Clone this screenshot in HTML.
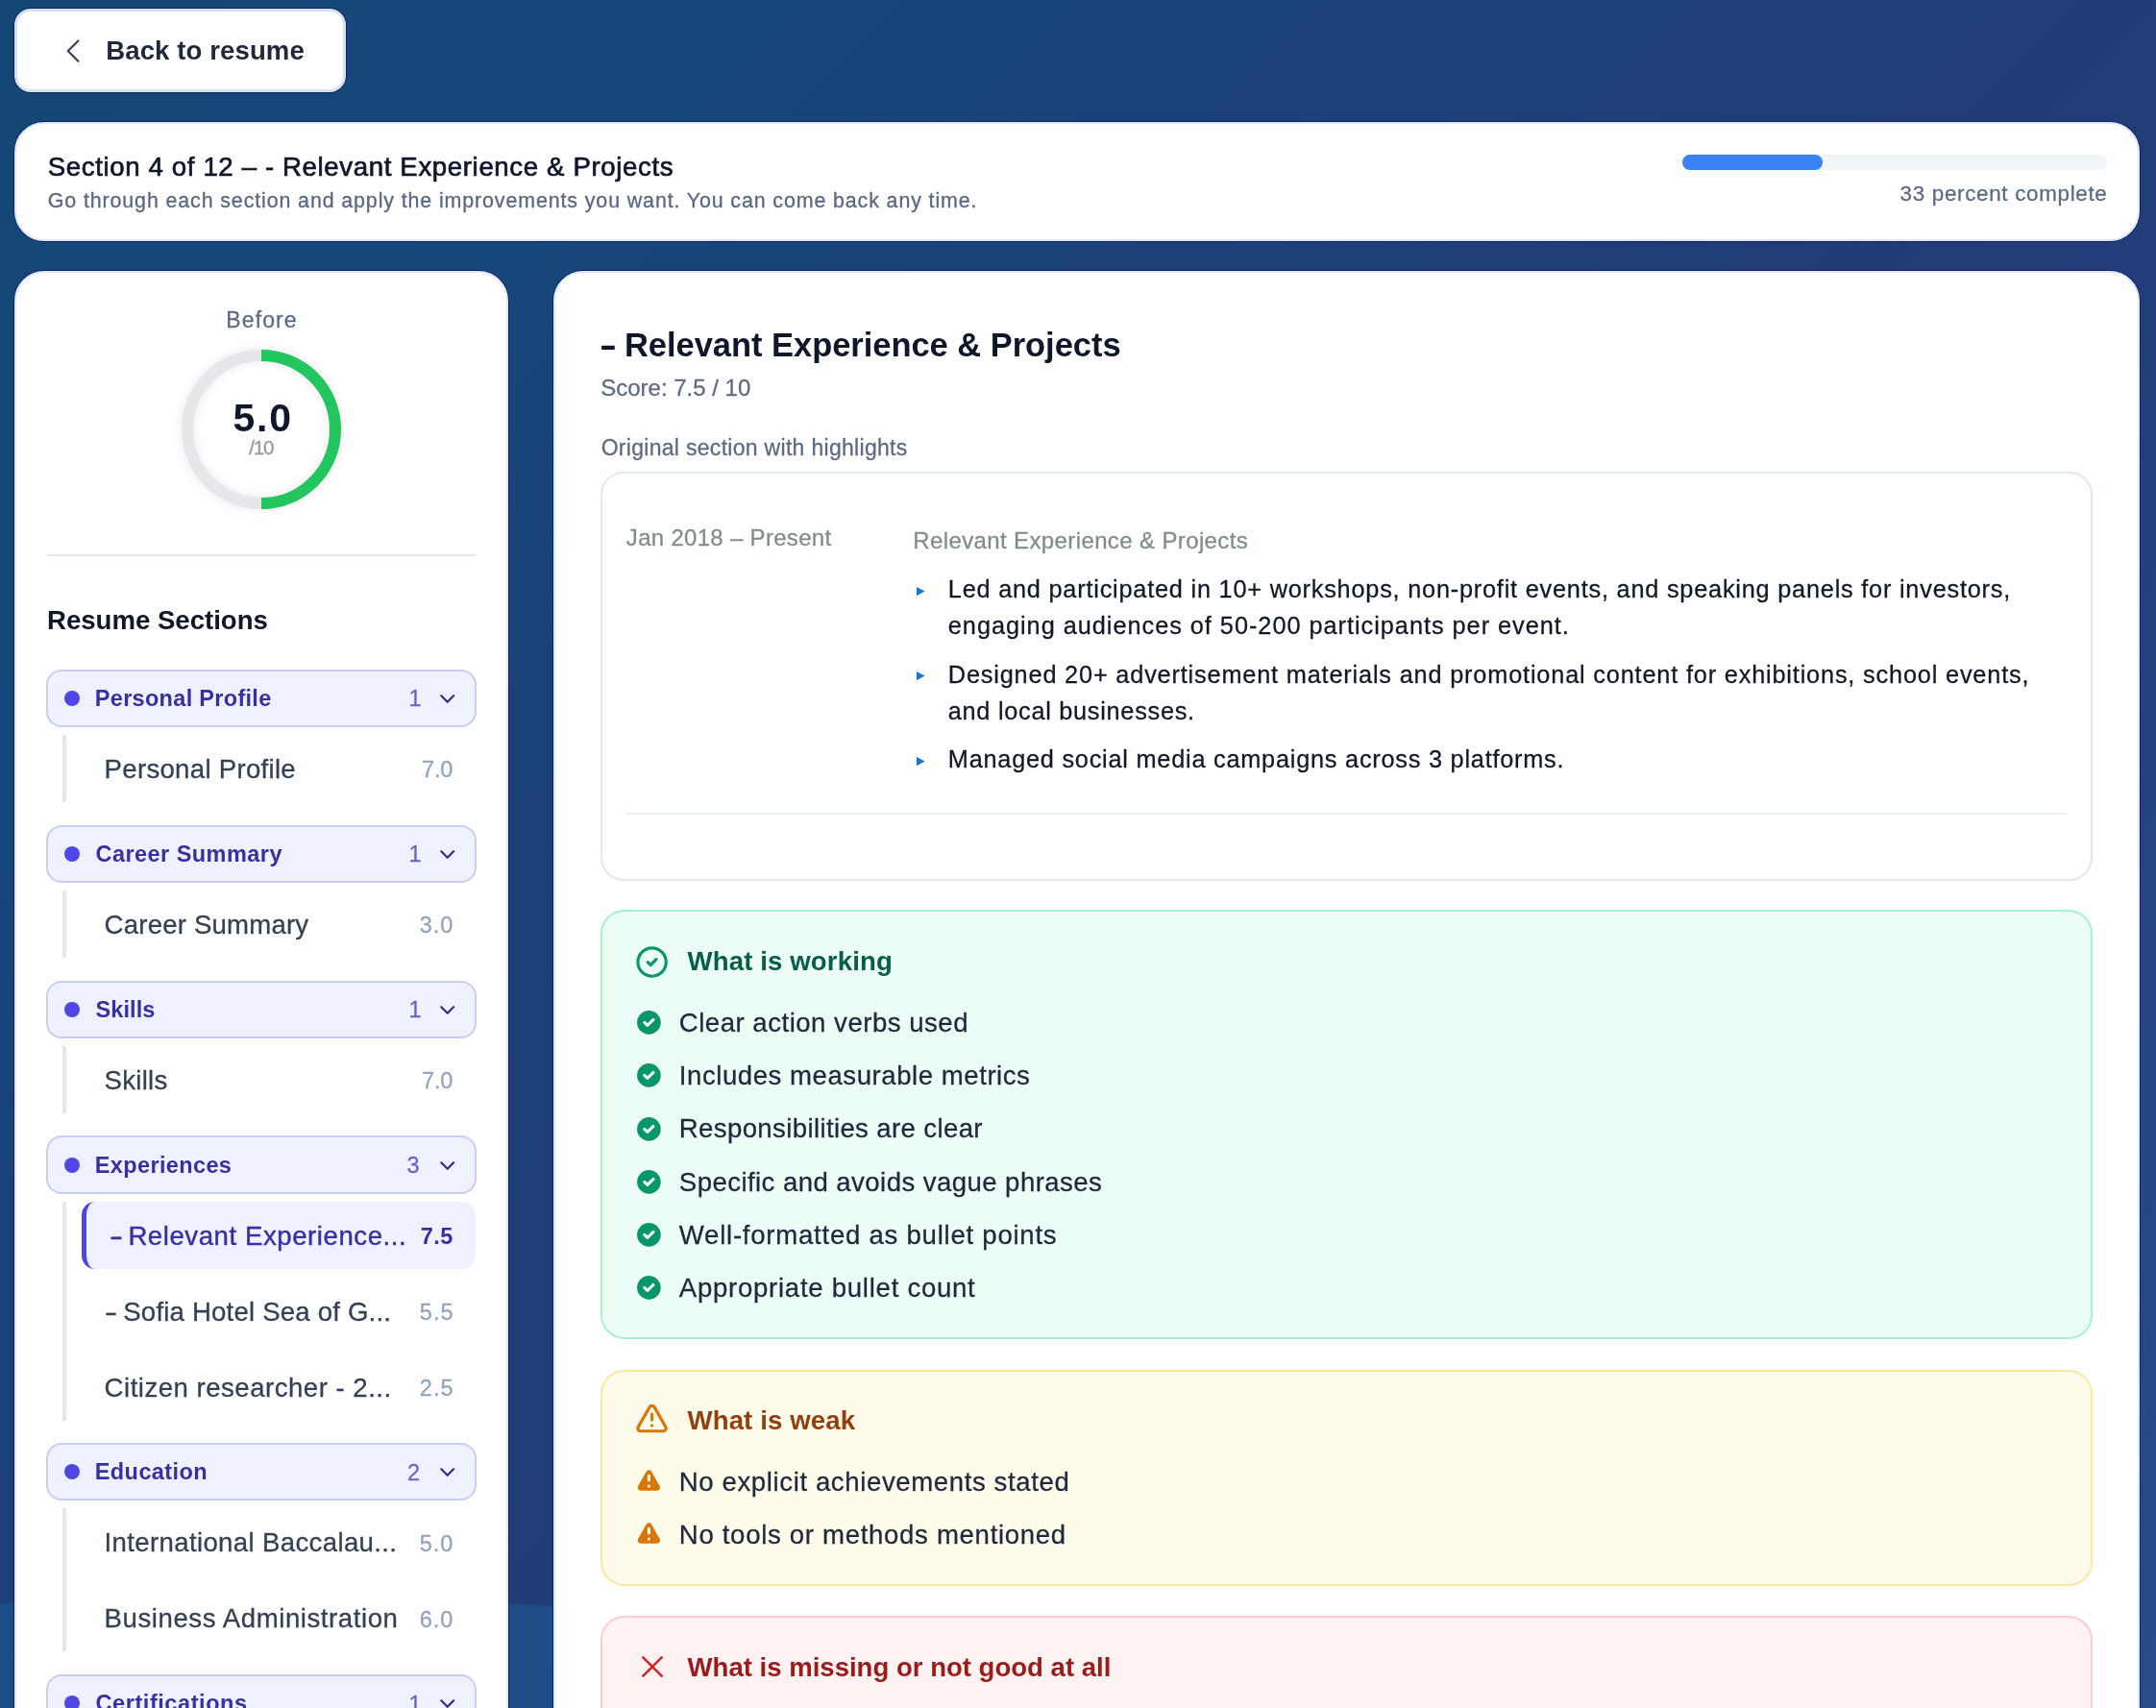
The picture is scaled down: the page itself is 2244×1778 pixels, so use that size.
<!DOCTYPE html>
<html lang="en"><head><meta charset="utf-8"><title>Resume review</title><style>
*{margin:0;padding:0;box-sizing:border-box;}
html,body{width:2244px;height:1778px;overflow:hidden;}
body{position:relative;font-family:"Liberation Sans", sans-serif;background:linear-gradient(135deg,#144775 0%,#16477a 20%,#1a4278 31%,#203c77 55%,#254685 85%,#294b8a 100%);}
#app{position:absolute;left:0;top:0;width:2244px;height:1778px;overflow:hidden;will-change:transform;}
.abs{position:absolute;display:block;}
.t{position:absolute;white-space:nowrap;line-height:1;font-family:"Liberation Sans", sans-serif;}
.card{background:#fff;border:2.6px solid #dfe6f5;box-shadow:0 0 0 1px rgba(8,10,90,.55);box-sizing:border-box;}
</style></head>
<body>
<div id="app">
<svg class="abs" style="left:0;top:1600px" width="2244" height="178" viewBox="0 0 2244 178"><path d="M0 69 C 200 60, 400 62, 576 72 C 900 92, 1300 140, 2244 178 L2244 178 L0 178 Z" fill="#1e5a94" fill-opacity="0.55"/></svg>
<div class="card" style="position:absolute;left:15px;top:9px;width:345px;height:87px;border-radius:17px;border:3px solid #d8e0ef;"></div>
<svg class="abs" style="left:58.9px;top:35.55px" width="34.2" height="34.2" viewBox="0 0 24 24" fill="none" stroke="#334155" stroke-width="1.5" stroke-linecap="round" stroke-linejoin="round"><path d="M15.75 19.5 8.25 12l7.5-7.5"/></svg>
<div class="t" id="back" style="left:110.20px;top:39.00px;font-size:27.6px;color:#1e293b;font-weight:700;letter-spacing:0.085px;">Back to resume</div>
<div class="card" style="position:absolute;left:15px;top:127px;width:2212px;height:124px;border-radius:31px;"></div>
<div class="t" id="hd1" style="left:49.73px;top:160.00px;font-size:27.6px;color:#0f172a;letter-spacing:0.636px;-webkit-text-stroke:0.7px #0f172a;">Section 4 of 12 – - Relevant Experience &amp; Projects</div>
<div class="t" id="hd2" style="left:49.75px;top:199.00px;font-size:21.4px;color:#5a6880;letter-spacing:0.889px;-webkit-text-stroke:0.3px #5a6880;">Go through each section and apply the improvements you want. You can come back any time.</div>
<div style="position:absolute;left:1751px;top:161px;width:442px;height:16px;background:#f1f5f9;border-radius:8px;"></div>
<div style="position:absolute;left:1751px;top:161px;width:146px;height:16px;background:#3b82f6;border-radius:8px;"></div>
<div class="t" id="pct" style="left:1977.59px;top:191.00px;font-size:22.4px;color:#5c6a82;letter-spacing:0.687px;-webkit-text-stroke:0.28px #5c6a82;">33 percent complete</div>
<div class="card" style="position:absolute;left:15px;top:282px;width:514px;height:1618px;border-radius:31px;"></div>
<div class="t" id="before" style="left:235.30px;top:322.00px;font-size:23px;color:#5c6a82;letter-spacing:1.110px;-webkit-text-stroke:0.28px #5c6a82;">Before</div>
<svg class="abs" style="left:182px;top:357px;filter:drop-shadow(0 0 5px rgba(15,23,42,.10));overflow:visible" width="180" height="180" viewBox="0 0 180 180"><circle cx="90" cy="90" r="77" fill="none" stroke="#e5e7eb" stroke-width="12"/><path d="M90 13 A77 77 0 0 1 90 167" fill="none" stroke="#22c55e" stroke-width="12"/></svg>
<div class="t" id="score" style="left:242.47px;top:415.00px;font-size:41px;color:#0f172a;font-weight:700;letter-spacing:1.793px;">5.0</div>
<div class="t" id="of10" style="left:259.14px;top:456.00px;font-size:20.7px;color:#9298a6;letter-spacing:-1.192px;-webkit-text-stroke:0.28px #9298a6;">/10</div>
<div style="position:absolute;left:49px;top:577px;width:446px;height:2px;background:#e2e8f0;"></div>
<div class="t" id="rs" style="left:49.00px;top:632.00px;font-size:27.6px;color:#0f172a;font-weight:700;letter-spacing:-0.010px;">Resume Sections</div>
<div style="position:absolute;left:48.4px;top:696.5px;width:447.8px;height:60.5px;background:#eef2ff;border:2px solid #c8cdf2;border-radius:16px;box-sizing:border-box;"></div>
<div style="position:absolute;left:67px;top:719.0px;width:16px;height:16.0px;background:#4f46e5;border-radius:50%;"></div>
<div class="t" id="g1h" style="left:98.79px;top:716.00px;font-size:23.5px;color:#3730a3;font-weight:700;letter-spacing:0.303px;">Personal Profile</div>
<div class="t" id="g1c" style="left:425.58px;top:716.00px;font-size:23.5px;color:#6366c8;-webkit-text-stroke:0.28px #6366c8;">1</div>
<svg class="abs" style="left:455px;top:717.0px" width="22" height="20" viewBox="0 0 22 20" fill="none" stroke="#312e81" stroke-width="2.2" stroke-linecap="round" stroke-linejoin="round"><path d="M4.3 7.2 L10.7 13.8 L17.1 7.2"/></svg>
<div style="position:absolute;left:65px;top:765.0px;width:4px;height:70.0px;background:#e5e7eb;"></div>
<div class="t" id="g1i0" style="left:108.60px;top:787.00px;font-size:27.6px;color:#334155;letter-spacing:0.288px;-webkit-text-stroke:0.28px #334155;">Personal Profile</div>
<div class="t" id="g1s0" style="left:439.10px;top:790.00px;font-size:23.5px;color:#94a3b8;letter-spacing:-0.240px;-webkit-text-stroke:0.28px #94a3b8;">7.0</div>
<div style="position:absolute;left:48.4px;top:858.5px;width:447.8px;height:60.5px;background:#eef2ff;border:2px solid #c8cdf2;border-radius:16px;box-sizing:border-box;"></div>
<div style="position:absolute;left:67px;top:881.0px;width:16px;height:16.0px;background:#4f46e5;border-radius:50%;"></div>
<div class="t" id="g2h" style="left:99.51px;top:878.00px;font-size:23.5px;color:#3730a3;font-weight:700;letter-spacing:0.454px;">Career Summary</div>
<div class="t" id="g2c" style="left:425.58px;top:878.00px;font-size:23.5px;color:#6366c8;-webkit-text-stroke:0.28px #6366c8;">1</div>
<svg class="abs" style="left:455px;top:879.0px" width="22" height="20" viewBox="0 0 22 20" fill="none" stroke="#312e81" stroke-width="2.2" stroke-linecap="round" stroke-linejoin="round"><path d="M4.3 7.2 L10.7 13.8 L17.1 7.2"/></svg>
<div style="position:absolute;left:65px;top:927.0px;width:4px;height:70.0px;background:#e5e7eb;"></div>
<div class="t" id="g2i0" style="left:108.60px;top:949.00px;font-size:27.6px;color:#334155;letter-spacing:0.193px;-webkit-text-stroke:0.28px #334155;">Career Summary</div>
<div class="t" id="g2s0" style="left:436.79px;top:952.00px;font-size:23.5px;color:#94a3b8;letter-spacing:0.915px;-webkit-text-stroke:0.28px #94a3b8;">3.0</div>
<div style="position:absolute;left:48.4px;top:1020.5px;width:447.8px;height:60.5px;background:#eef2ff;border:2px solid #c8cdf2;border-radius:16px;box-sizing:border-box;"></div>
<div style="position:absolute;left:67px;top:1043.0px;width:16px;height:16.0px;background:#4f46e5;border-radius:50%;"></div>
<div class="t" id="g3h" style="left:99.54px;top:1040.00px;font-size:23.5px;color:#3730a3;font-weight:700;letter-spacing:0.089px;">Skills</div>
<div class="t" id="g3c" style="left:425.58px;top:1040.00px;font-size:23.5px;color:#6366c8;-webkit-text-stroke:0.28px #6366c8;">1</div>
<svg class="abs" style="left:455px;top:1041.0px" width="22" height="20" viewBox="0 0 22 20" fill="none" stroke="#312e81" stroke-width="2.2" stroke-linecap="round" stroke-linejoin="round"><path d="M4.3 7.2 L10.7 13.8 L17.1 7.2"/></svg>
<div style="position:absolute;left:65px;top:1089.0px;width:4px;height:70.0px;background:#e5e7eb;"></div>
<div class="t" id="g3i0" style="left:108.60px;top:1111.00px;font-size:27.6px;color:#334155;letter-spacing:0.260px;-webkit-text-stroke:0.28px #334155;">Skills</div>
<div class="t" id="g3s0" style="left:439.10px;top:1114.00px;font-size:23.5px;color:#94a3b8;letter-spacing:-0.240px;-webkit-text-stroke:0.28px #94a3b8;">7.0</div>
<div style="position:absolute;left:48.4px;top:1182.2px;width:447.8px;height:60.5px;background:#eef2ff;border:2px solid #c8cdf2;border-radius:16px;box-sizing:border-box;"></div>
<div style="position:absolute;left:67px;top:1204.7px;width:16px;height:16.0px;background:#4f46e5;border-radius:50%;"></div>
<div class="t" id="g4h" style="left:98.79px;top:1202.00px;font-size:23.5px;color:#3730a3;font-weight:700;letter-spacing:0.366px;">Experiences</div>
<div class="t" id="g4c" style="left:423.49px;top:1202.00px;font-size:23.5px;color:#6366c8;-webkit-text-stroke:0.28px #6366c8;">3</div>
<svg class="abs" style="left:455px;top:1202.7px" width="22" height="20" viewBox="0 0 22 20" fill="none" stroke="#312e81" stroke-width="2.2" stroke-linecap="round" stroke-linejoin="round"><path d="M4.3 7.2 L10.7 13.8 L17.1 7.2"/></svg>
<div style="position:absolute;left:65px;top:1250.7px;width:4px;height:228.0px;background:#e5e7eb;"></div>
<div style="position:absolute;left:85px;top:1250.7px;width:410px;height:70.0px;background:#eef2ff;border-left:5px solid #4f46e5;border-radius:14px;box-sizing:border-box;"></div>
<div class="t" id="g4d0" style="left:113.96px;top:1273.00px;font-size:27.6px;color:#3730a3;-webkit-text-stroke:0.4px #3730a3;transform:scaleX(1.517);transform-origin:0 0;">-</div>
<div class="t" id="g4i0" style="left:133.40px;top:1273.00px;font-size:27.6px;color:#3730a3;letter-spacing:0.554px;-webkit-text-stroke:0.4px #3730a3;">Relevant Experience...</div>
<div class="t" id="g4s0" style="left:437.69px;top:1276.00px;font-size:23.5px;color:#3730a3;font-weight:700;letter-spacing:0.446px;">7.5</div>
<div class="t" id="g4d1" style="left:108.51px;top:1352.00px;font-size:27.6px;color:#334155;-webkit-text-stroke:0.28px #334155;transform:scaleX(1.424);transform-origin:0 0;">-</div>
<div class="t" id="g4i1" style="left:128.27px;top:1352.00px;font-size:27.6px;color:#334155;letter-spacing:0.187px;-webkit-text-stroke:0.28px #334155;">Sofia Hotel Sea of G...</div>
<div class="t" id="g4s1" style="left:436.79px;top:1355.00px;font-size:23.5px;color:#94a3b8;letter-spacing:1.097px;-webkit-text-stroke:0.28px #94a3b8;">5.5</div>
<div class="t" id="g4i2" style="left:108.60px;top:1431.00px;font-size:27.6px;color:#334155;letter-spacing:0.491px;-webkit-text-stroke:0.28px #334155;">Citizen researcher - 2...</div>
<div class="t" id="g4s2" style="left:436.70px;top:1434.00px;font-size:23.5px;color:#94a3b8;letter-spacing:1.142px;-webkit-text-stroke:0.28px #94a3b8;">2.5</div>
<div style="position:absolute;left:48.4px;top:1501.7px;width:447.8px;height:60.5px;background:#eef2ff;border:2px solid #c8cdf2;border-radius:16px;box-sizing:border-box;"></div>
<div style="position:absolute;left:67px;top:1524.2px;width:16px;height:16.0px;background:#4f46e5;border-radius:50%;"></div>
<div class="t" id="g5h" style="left:98.79px;top:1521.00px;font-size:23.5px;color:#3730a3;font-weight:700;letter-spacing:0.404px;">Education</div>
<div class="t" id="g5c" style="left:423.90px;top:1522.00px;font-size:23.5px;color:#6366c8;-webkit-text-stroke:0.28px #6366c8;">2</div>
<svg class="abs" style="left:455px;top:1522.2px" width="22" height="20" viewBox="0 0 22 20" fill="none" stroke="#312e81" stroke-width="2.2" stroke-linecap="round" stroke-linejoin="round"><path d="M4.3 7.2 L10.7 13.8 L17.1 7.2"/></svg>
<div style="position:absolute;left:65px;top:1570.2px;width:4px;height:149.0px;background:#e5e7eb;"></div>
<div class="t" id="g5i0" style="left:108.60px;top:1592.00px;font-size:27.6px;color:#334155;letter-spacing:0.347px;-webkit-text-stroke:0.28px #334155;">International Baccalau...</div>
<div class="t" id="g5s0" style="left:436.79px;top:1596.00px;font-size:23.5px;color:#94a3b8;letter-spacing:0.915px;-webkit-text-stroke:0.28px #94a3b8;">5.0</div>
<div class="t" id="g5i1" style="left:108.60px;top:1671.00px;font-size:27.6px;color:#334155;letter-spacing:0.562px;-webkit-text-stroke:0.28px #334155;">Business Administration</div>
<div class="t" id="g5s1" style="left:436.69px;top:1675.00px;font-size:23.5px;color:#94a3b8;letter-spacing:0.964px;-webkit-text-stroke:0.28px #94a3b8;">6.0</div>
<div style="position:absolute;left:48.4px;top:1742.6px;width:447.8px;height:60.5px;background:#eef2ff;border:2px solid #c8cdf2;border-radius:16px;box-sizing:border-box;"></div>
<div style="position:absolute;left:67px;top:1765.1px;width:16px;height:16.0px;background:#4f46e5;border-radius:50%;"></div>
<div class="t" id="g6h" style="left:99.51px;top:1762.00px;font-size:23.5px;color:#3730a3;font-weight:700;letter-spacing:0.567px;">Certifications</div>
<div class="t" id="g6c" style="left:425.58px;top:1763.00px;font-size:23.5px;color:#6366c8;-webkit-text-stroke:0.28px #6366c8;">1</div>
<svg class="abs" style="left:455px;top:1763.1px" width="22" height="20" viewBox="0 0 22 20" fill="none" stroke="#312e81" stroke-width="2.2" stroke-linecap="round" stroke-linejoin="round"><path d="M4.3 7.2 L10.7 13.8 L17.1 7.2"/></svg>
<div style="position:absolute;left:65px;top:1811.1px;width:4px;height:70.0px;background:#e5e7eb;"></div>
<div class="t" id="g6i0" style="left:108.60px;top:1833.00px;font-size:27.6px;color:#334155;letter-spacing:0.603px;-webkit-text-stroke:0.28px #334155;">Certification</div>
<div class="t" id="g6s0" style="left:436.69px;top:1836.00px;font-size:23.5px;color:#94a3b8;letter-spacing:0.964px;-webkit-text-stroke:0.28px #94a3b8;">6.0</div>
<div class="card" style="position:absolute;left:576px;top:282px;width:1651px;height:1618px;border-radius:31px;"></div>
<div class="t" id="titled" style="left:624.34px;top:342.00px;font-size:34.5px;color:#0f172a;font-weight:700;transform:scaleX(1.558);transform-origin:0 0;">-</div>
<div class="t" id="title" style="left:649.94px;top:342.00px;font-size:34.5px;color:#0f172a;font-weight:700;letter-spacing:-0.037px;">Relevant Experience &amp; Projects</div>
<div class="t" id="sc" style="left:625.19px;top:392.00px;font-size:24px;color:#5c6a82;-webkit-text-stroke:0.28px #5c6a82;">Score: 7.5 / 10</div>
<div class="t" id="orig" style="left:625.64px;top:455.00px;font-size:23px;color:#5c6a82;letter-spacing:0.299px;-webkit-text-stroke:0.28px #5c6a82;">Original section with highlights</div>
<div style="position:absolute;left:625.3px;top:491px;width:1552.3999999999999px;height:425.5px;border:2px solid #e2e8f0;border-radius:24px;box-sizing:border-box;background:#fff;"></div>
<div class="t" id="date" style="left:651.84px;top:548.00px;font-size:24px;color:#7f8c8d;letter-spacing:0.304px;-webkit-text-stroke:0.28px #7f8c8d;">Jan 2018 – Present</div>
<div class="t" id="rx" style="left:950.33px;top:551.00px;font-size:24px;color:#7f8c8d;letter-spacing:0.377px;-webkit-text-stroke:0.28px #7f8c8d;">Relevant Experience &amp; Projects</div>
<svg class="abs" style="left:953.8px;top:610.6px" width="9" height="9.2" viewBox="0 0 9 9.2"><path d="M0 0 L8.6 4.6 L0 9.2 Z" fill="#1976d2"/></svg>
<div class="t" id="b1a" style="left:986.80px;top:601.00px;font-size:25.3px;color:#111827;letter-spacing:0.782px;-webkit-text-stroke:0.28px #111827;">Led and participated in 10+ workshops, non-profit events, and speaking panels for investors,</div>
<div class="t" id="b1b" style="left:986.80px;top:639.00px;font-size:25.3px;color:#111827;letter-spacing:0.975px;-webkit-text-stroke:0.28px #111827;">engaging audiences of 50-200 participants per event.</div>
<svg class="abs" style="left:953.8px;top:699.1px" width="9" height="9.2" viewBox="0 0 9 9.2"><path d="M0 0 L8.6 4.6 L0 9.2 Z" fill="#1976d2"/></svg>
<div class="t" id="b2a" style="left:986.80px;top:690.00px;font-size:25.3px;color:#111827;letter-spacing:0.824px;-webkit-text-stroke:0.28px #111827;">Designed 20+ advertisement materials and promotional content for exhibitions, school events,</div>
<div class="t" id="b2b" style="left:986.80px;top:728.00px;font-size:25.3px;color:#111827;letter-spacing:0.720px;-webkit-text-stroke:0.28px #111827;">and local businesses.</div>
<svg class="abs" style="left:953.8px;top:788.1px" width="9" height="9.2" viewBox="0 0 9 9.2"><path d="M0 0 L8.6 4.6 L0 9.2 Z" fill="#1976d2"/></svg>
<div class="t" id="b3" style="left:986.80px;top:778.00px;font-size:25.3px;color:#111827;letter-spacing:0.766px;-webkit-text-stroke:0.28px #111827;">Managed social media campaigns across 3 platforms.</div>
<div style="position:absolute;left:652px;top:846px;width:1499px;height:1.5px;background:#eceff4;"></div>
<div style="position:absolute;left:625.3px;top:947px;width:1552.3999999999999px;height:447.20000000000005px;background:#ecfdf5;border:2px solid #a7f3d0;border-radius:25px;box-sizing:border-box;"></div>
<svg class="abs" style="left:661.2px;top:983.8px" width="35.2" height="35.2" viewBox="0 0 24 24" fill="none" stroke="#059669" stroke-width="2.15" stroke-linecap="round" stroke-linejoin="round"><circle cx="12" cy="12" r="10"/><path d="m9 12 2 2 4-4"/></svg>
<div class="t" id="okh" style="left:715.55px;top:987.00px;font-size:27.6px;color:#065f46;font-weight:700;letter-spacing:0.119px;">What is working</div>
<svg class="abs" style="left:659.8px;top:1049.0px" width="30.8" height="30.8" viewBox="0 0 20 20" fill="#059669"><path fill-rule="evenodd" clip-rule="evenodd" d="M10 18a8 8 0 100-16 8 8 0 000 16zm3.707-9.293a1 1 0 00-1.414-1.414L9 10.586 7.707 9.293a1 1 0 00-1.414 1.414l2 2a1 1 0 001.414 0l4-4z"/></svg>
<div class="t" id="oki0" style="left:706.80px;top:1051.00px;font-size:27.6px;color:#1e293b;letter-spacing:0.494px;-webkit-text-stroke:0.28px #1e293b;">Clear action verbs used</div>
<svg class="abs" style="left:659.8px;top:1104.3px" width="30.8" height="30.8" viewBox="0 0 20 20" fill="#059669"><path fill-rule="evenodd" clip-rule="evenodd" d="M10 18a8 8 0 100-16 8 8 0 000 16zm3.707-9.293a1 1 0 00-1.414-1.414L9 10.586 7.707 9.293a1 1 0 00-1.414 1.414l2 2a1 1 0 001.414 0l4-4z"/></svg>
<div class="t" id="oki1" style="left:706.80px;top:1106.00px;font-size:27.6px;color:#1e293b;letter-spacing:0.535px;-webkit-text-stroke:0.28px #1e293b;">Includes measurable metrics</div>
<svg class="abs" style="left:659.8px;top:1159.6px" width="30.8" height="30.8" viewBox="0 0 20 20" fill="#059669"><path fill-rule="evenodd" clip-rule="evenodd" d="M10 18a8 8 0 100-16 8 8 0 000 16zm3.707-9.293a1 1 0 00-1.414-1.414L9 10.586 7.707 9.293a1 1 0 00-1.414 1.414l2 2a1 1 0 001.414 0l4-4z"/></svg>
<div class="t" id="oki2" style="left:706.80px;top:1161.00px;font-size:27.6px;color:#1e293b;letter-spacing:0.360px;-webkit-text-stroke:0.28px #1e293b;">Responsibilities are clear</div>
<svg class="abs" style="left:659.8px;top:1214.8px" width="30.8" height="30.8" viewBox="0 0 20 20" fill="#059669"><path fill-rule="evenodd" clip-rule="evenodd" d="M10 18a8 8 0 100-16 8 8 0 000 16zm3.707-9.293a1 1 0 00-1.414-1.414L9 10.586 7.707 9.293a1 1 0 00-1.414 1.414l2 2a1 1 0 001.414 0l4-4z"/></svg>
<div class="t" id="oki3" style="left:706.80px;top:1217.00px;font-size:27.6px;color:#1e293b;letter-spacing:0.425px;-webkit-text-stroke:0.28px #1e293b;">Specific and avoids vague phrases</div>
<svg class="abs" style="left:659.8px;top:1270.1px" width="30.8" height="30.8" viewBox="0 0 20 20" fill="#059669"><path fill-rule="evenodd" clip-rule="evenodd" d="M10 18a8 8 0 100-16 8 8 0 000 16zm3.707-9.293a1 1 0 00-1.414-1.414L9 10.586 7.707 9.293a1 1 0 00-1.414 1.414l2 2a1 1 0 001.414 0l4-4z"/></svg>
<div class="t" id="oki4" style="left:706.80px;top:1272.00px;font-size:27.6px;color:#1e293b;letter-spacing:0.740px;-webkit-text-stroke:0.28px #1e293b;">Well-formatted as bullet points</div>
<svg class="abs" style="left:659.8px;top:1325.4px" width="30.8" height="30.8" viewBox="0 0 20 20" fill="#059669"><path fill-rule="evenodd" clip-rule="evenodd" d="M10 18a8 8 0 100-16 8 8 0 000 16zm3.707-9.293a1 1 0 00-1.414-1.414L9 10.586 7.707 9.293a1 1 0 00-1.414 1.414l2 2a1 1 0 001.414 0l4-4z"/></svg>
<div class="t" id="oki5" style="left:706.80px;top:1327.00px;font-size:27.6px;color:#1e293b;letter-spacing:0.718px;-webkit-text-stroke:0.28px #1e293b;">Appropriate bullet count</div>
<div style="position:absolute;left:625.3px;top:1425.6px;width:1552.3999999999999px;height:225.0px;background:#fffbeb;border:2px solid #fce7a0;border-radius:25px;box-sizing:border-box;"></div>
<svg class="abs" style="left:661.2px;top:1459.1px" width="35.2" height="35.2" viewBox="0 0 24 24" fill="none" stroke="#d97706" stroke-width="2.15" stroke-linecap="round" stroke-linejoin="round"><path d="m21.73 18-8-14a2 2 0 0 0-3.48 0l-8 14A2 2 0 0 0 4 21h16a2 2 0 0 0 1.73-3Z"/><path d="M12 9v4"/><path d="M12 17h.01"/></svg>
<div class="t" id="wkh" style="left:715.55px;top:1465.00px;font-size:27.6px;color:#92400e;font-weight:700;letter-spacing:0.110px;">What is weak</div>
<svg class="abs" style="left:659.8px;top:1526.7px" width="30.8" height="30.8" viewBox="0 0 20 20" fill="#d97706"><path fill-rule="evenodd" clip-rule="evenodd" d="M8.257 3.099c.765-1.36 2.722-1.36 3.486 0l5.58 9.92c.75 1.334-.213 2.98-1.742 2.98H4.42c-1.53 0-2.493-1.646-1.743-2.98l5.58-9.92zM11 13a1 1 0 11-2 0 1 1 0 012 0zm-1-8a1 1 0 00-1 1v3a1 1 0 002 0V6a1 1 0 00-1-1z"/></svg>
<div class="t" id="wki0" style="left:706.80px;top:1529.00px;font-size:27.6px;color:#1e293b;letter-spacing:0.598px;-webkit-text-stroke:0.28px #1e293b;">No explicit achievements stated</div>
<svg class="abs" style="left:659.8px;top:1582.2px" width="30.8" height="30.8" viewBox="0 0 20 20" fill="#d97706"><path fill-rule="evenodd" clip-rule="evenodd" d="M8.257 3.099c.765-1.36 2.722-1.36 3.486 0l5.58 9.92c.75 1.334-.213 2.98-1.742 2.98H4.42c-1.53 0-2.493-1.646-1.743-2.98l5.58-9.92zM11 13a1 1 0 11-2 0 1 1 0 012 0zm-1-8a1 1 0 00-1 1v3a1 1 0 002 0V6a1 1 0 00-1-1z"/></svg>
<div class="t" id="wki1" style="left:706.80px;top:1584.00px;font-size:27.6px;color:#1e293b;letter-spacing:0.677px;-webkit-text-stroke:0.28px #1e293b;">No tools or methods mentioned</div>
<div style="position:absolute;left:625.3px;top:1682px;width:1552.3999999999999px;height:219px;background:#fef2f2;border:2px solid #fccdcd;border-radius:25px;box-sizing:border-box;"></div>
<svg class="abs" style="left:664.8px;top:1721.4px" width="28" height="28" viewBox="0 0 28 28" fill="none" stroke="#d4252a" stroke-width="2.6" stroke-linecap="butt"><path d="M3.6 3.6 L24.4 24.4 M24.4 3.6 L3.6 24.4"/></svg>
<div class="t" id="msh" style="left:715.55px;top:1722.00px;font-size:27.6px;color:#991b1b;font-weight:700;letter-spacing:-0.021px;">What is missing or not good at all</div>
</div>
</body></html>
